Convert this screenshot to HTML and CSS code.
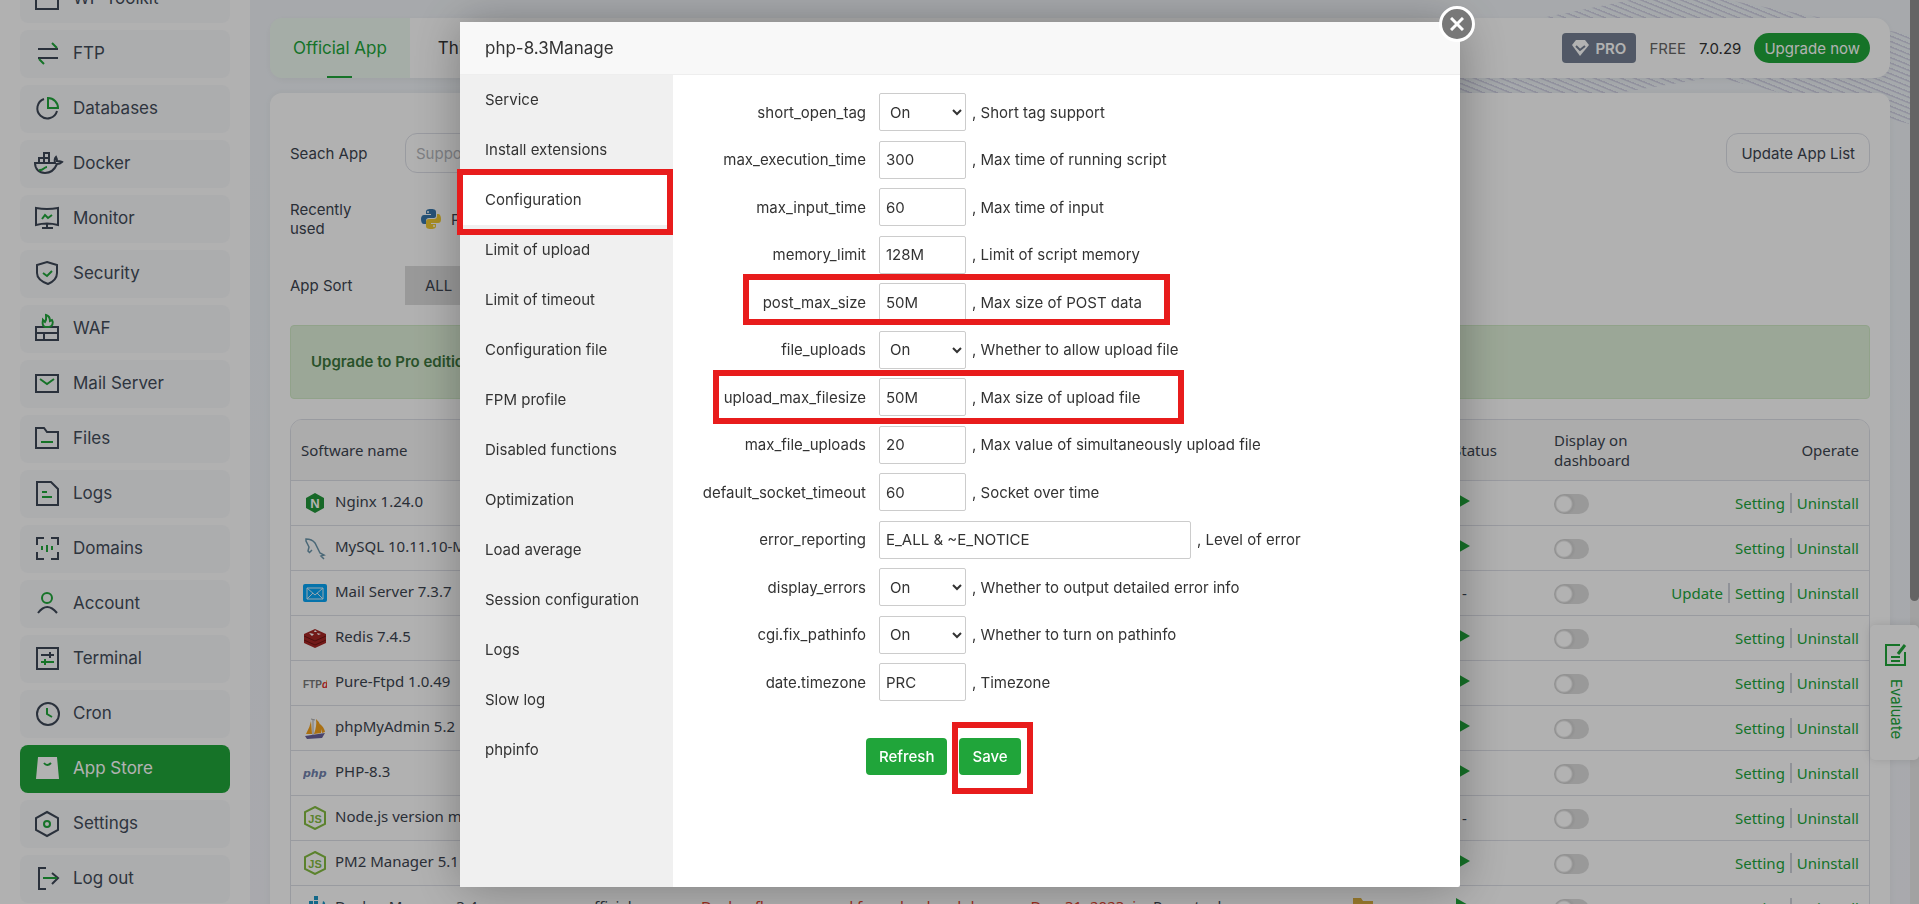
FILE: index.html
```html
<!DOCTYPE html>
<html lang="en">
<head>
	<meta charset="UTF-8">
	<title>App Store</title>
	<link rel="stylesheet" href="styles.css">
</head>
<body>

	<div class="page">
		<nav class="sidebar">
			<a href="#" class="menu-item"><svg class="icon" viewBox="0 0 24 24"><path d="M1 2H23V23H1Z"/></svg>WP Toolkit</a>
			<a href="#" class="menu-item"><svg class="icon" viewBox="0 0 24 24"><path d="M3 8H23M3 17H23"/><path class="green" d="M17 2L22 7M4 18L9 23"/></svg>FTP</a>
			<a href="#" class="menu-item"><svg class="icon" viewBox="0 0 24 24"><path d="M9 3A10 10 0 1 0 22 15"/><path class="green" d="M13 2V12H23A10 10 0 0 0 13 2Z"/></svg>Databases</a>
			<a href="#" class="menu-item"><svg class="icon" viewBox="0 0 24 24"><path d="M0 12H20C19 8 20 7 21 6C22 8 22 9 22 10C24 10 25 10 27 11C25 13 23 13 22 13C19 20 15 22 10 22C4 22 0 18 0 12ZM4 12V7H14V12M9 12V2H14V7"/><path class="green" d="M4 19C8 20 9 16 12 16"/></svg>Docker</a>
			<a href="#" class="menu-item"><svg class="icon" viewBox="0 0 24 24"><path d="M1 2Q12 4 23 2V19Q12 16 1 19ZM12 18V22M7 22H18"/><path class="green" d="M7 13L10 9L13 12L17 9"/></svg>Monitor</a>
			<a href="#" class="menu-item"><svg class="icon" viewBox="0 0 24 24"><path d="M12 1L22 4V12Q22 19 13 23Q2 19 2 12V4Z"/><path class="green" d="M8 12L12 15L17 10"/></svg>Security</a>
			<a href="#" class="menu-item"><svg class="icon" viewBox="0 0 24 24"><path d="M1 11H23V24H1ZM1 17H23M9 17V24"/><path class="green" d="M10 11C6 9 8 6 8 4L10 6C12 3 11 1 11 -1C15 0 15 4 15 5L17 4C19 7 17 11 14 11Z"/></svg>WAF</a>
			<a href="#" class="menu-item"><svg class="icon" viewBox="0 0 24 24"><path d="M1 4H23V21H1Z"/><path class="green" d="M5 8L12 13L19 8"/></svg>Mail Server</a>
			<a href="#" class="menu-item"><svg class="icon" viewBox="0 0 24 24"><path d="M1 2H9L12 6H23V22H1Z"/><path class="green" d="M6 16H18"/></svg>Files</a>
			<a href="#" class="menu-item"><svg class="icon" viewBox="0 0 24 24"><path d="M2 1H16L23 8V24H2Z"/><path class="green" d="M7 11H12M7 16H17"/></svg>Logs</a>
			<a href="#" class="menu-item"><svg class="icon" viewBox="0 0 24 24"><path d="M9 2H2V9M16 2H23V9M9 23H2V16M16 23H23V16"/><path class="green" d="M7 10V14M12 9V16M17 10V14"/></svg>Domains</a>
			<a href="#" class="menu-item"><svg class="icon" viewBox="0 0 24 24"><path d="M3 22Q12 10 22 22"/><circle class="green" cx="12" cy="7" r="5"/></svg>Account</a>
			<a href="#" class="menu-item"><svg class="icon" viewBox="0 0 24 24"><path d="M2 2H23V23H2ZM6 9H19M15 6V12"/><path class="green" d="M6 16H19M10 13V19"/></svg>Terminal</a>
			<a href="#" class="menu-item"><svg class="icon" viewBox="0 0 24 24"><circle cx="13" cy="13" r="11"/><path class="green" d="M12 7V13L17 16"/></svg>Cron</a>
			<a href="#" class="menu-item active"><svg class="icon" viewBox="0 0 24 24"><path class="bag" d="M3 1H22L24 23H1Z"/><path class="green" d="M9 7Q12 11 16 7"/></svg>App Store</a>
			<a href="#" class="menu-item"><svg class="icon" viewBox="0 0 24 24"><path d="M12 1L23 7V19L12 25L1 19V7Z"/><circle class="green" cx="12" cy="13" r="3"/></svg>Settings</a>
			<a href="#" class="menu-item"><svg class="icon" viewBox="0 0 24 24"><path d="M11 2H4V23H11M17 7L23 12L17 18"/><path class="green" d="M8 12H22"/></svg>Log out</a>
		</nav>

		<main class="main">
			<div class="wave"></div>
			<header class="topbar">
				<a href="#" class="tab active">Official App</a>
				<a href="#" class="tab">Third-party App</a>
				<div class="version">
					<span class="pro"><svg width="17" height="16" viewBox="0 0 17 16"><path fill="#fff" d="M4 0H13L17 5L8 16L0 5Z"/><path fill="none" stroke="#747f92" stroke-width="2" d="M4 6L8 10L13 6"/></svg>PRO</span>
					<span class="free">FREE</span>
					<span>7.0.29</span>
					<button class="upgrade">Upgrade now</button>
				</div>
			</header>

			<section class="panel">
				<div class="filter">
					<label for="search">Seach App</label>
					<input type="text" id="search" class="search" placeholder="Supports fuzzy search">
					<button class="update">Update App List</button>
				</div>
				<div class="filter recent">
					<span class="filter-name">Recently<br>used</span>
					<svg class="python" width="20" height="20" viewBox="0 0 20 20"><path fill="#3776ab" d="M10 0C6 0 5 1 5 3V5H10V6H3C1 6 0 8 0 10C0 13 1 15 3 15H5V12C5 10 6 9 8 9H13C14 9 15 8 15 7V3C15 1 14 0 10 0Z"/><path fill="#f2cb30" d="M16 5H17C19 5 20 7 20 10C20 13 19 14 17 14H10V15H15V17C15 19 14 20 10 20C6 20 5 19 5 17V13C5 11 6 10 8 10H13C15 10 16 9 16 7Z"/><circle cx="7" cy="3" r="1" fill="#fff"/><circle cx="13" cy="17" r="1" fill="#fff"/></svg>
					<span>Python Manager</span>
				</div>
				<div class="filter">
					<span class="filter-name">App Sort</span>
					<button class="all">ALL</button>
				</div>
				<div class="alert">Upgrade to Pro edition</div>

				<div class="table-box">
					<table>
						<colgroup><col class="c-name"><col class="c-dev"><col><col class="c-expire"><col class="c-path"><col class="c-status"><col class="c-display"><col class="c-operate"></colgroup>
						<thead>
							<tr><th>Software name</th><th>Developer</th><th>Instructions</th><th>Expire date</th><th>Location</th><th>Status</th><th>Display on dashboard</th><th class="operate">Operate</th></tr>
						</thead>
						<tbody>
							<tr>
								<td><div class="soft"><svg viewBox="0 0 24 24"><path fill="#22963a" d="M12 2L21 7V17L12 22L3 17V7Z"/><text x="12" y="17" class="logo-n">N</text></svg>Nginx 1.24.0</div></td>
								<td></td><td></td><td></td><td></td>
								<td><svg class="play" viewBox="0 0 14 16"><path d="M0 0L14 8L0 16Z"/></svg></td>
								<td class="display"><input type="checkbox" class="switch" aria-label="Display Nginx"></td>
								<td class="operate"><a href="#">Setting</a><a href="#">Uninstall</a></td>
							</tr>
							<tr>
								<td><div class="soft"><svg viewBox="0 0 24 24"><path fill="none" stroke="#6c96ab" stroke-width="1.5" d="M7 17L5 15L6 11L3 5L3 3Q9 3 12 7Q15 13 17 17L21 19L18 20L21 23M7 16L9 14"/></svg>MySQL 10.11.10-MariaDB</div></td>
								<td></td><td></td><td></td><td></td>
								<td><svg class="play" viewBox="0 0 14 16"><path d="M0 0L14 8L0 16Z"/></svg></td>
								<td class="display"><input type="checkbox" class="switch" aria-label="Display MySQL"></td>
								<td class="operate"><a href="#">Setting</a><a href="#">Uninstall</a></td>
							</tr>
							<tr>
								<td><div class="soft"><svg viewBox="0 0 24 24"><rect y="3" width="24" height="18" rx="2" fill="#08a5f5"/><path fill="none" stroke="#d9effc" d="M4 7H20V18H4ZM4 7L12 14L20 7M4 18L10 12M20 18L14 12"/></svg>Mail Server 7.3.7</div></td>
								<td></td><td></td><td></td><td></td>
								<td class="dash">-</td>
								<td class="display"><input type="checkbox" class="switch" aria-label="Display Mail Server"></td>
								<td class="operate"><a href="#">Update</a><a href="#">Setting</a><a href="#">Uninstall</a></td>
							</tr>
							<tr>
								<td><div class="soft"><svg viewBox="0 0 24 24"><path fill="#a52624" d="M1 8L12 3L23 8V17L12 22L1 17Z"/><path fill="none" stroke="#701614" d="M1 10L12 15L23 10M1 14L12 19L23 14"/><path fill="#fff" d="M6 7L11 8L9 10ZM12 4L14 6L11 6ZM14 7L18 8L15 9Z"/></svg>Redis 7.4.5</div></td>
								<td></td><td></td><td></td><td></td>
								<td><svg class="play" viewBox="0 0 14 16"><path d="M0 0L14 8L0 16Z"/></svg></td>
								<td class="display"><input type="checkbox" class="switch" aria-label="Display Redis"></td>
								<td class="operate"><a href="#">Setting</a><a href="#">Uninstall</a></td>
							</tr>
							<tr>
								<td><div class="soft"><svg viewBox="0 0 24 24"><text x="0" y="17" class="logo-ftp">FTP<tspan>d</tspan></text></svg>Pure-Ftpd 1.0.49</div></td>
								<td></td><td></td><td></td><td></td>
								<td><svg class="play" viewBox="0 0 14 16"><path d="M0 0L14 8L0 16Z"/></svg></td>
								<td class="display"><input type="checkbox" class="switch" aria-label="Display Pure-Ftpd"></td>
								<td class="operate"><a href="#">Setting</a><a href="#">Uninstall</a></td>
							</tr>
							<tr>
								<td><div class="soft"><svg viewBox="0 0 24 24"><path fill="#f3a11c" d="M8 5L9 18L3 18Q7 11 8 5ZM13 3Q19 8 18 17L11 18Q14 10 13 3ZM17 8Q21 11 22 16L19 17Z"/><path fill="#67609a" d="M2 20L22 17L19 22L4 23Z"/><path fill="none" stroke="#aaa" d="M10 4V19M8 3L12 4"/></svg>phpMyAdmin 5.2</div></td>
								<td></td><td></td><td></td><td></td>
								<td><svg class="play" viewBox="0 0 14 16"><path d="M0 0L14 8L0 16Z"/></svg></td>
								<td class="display"><input type="checkbox" class="switch" aria-label="Display phpMyAdmin"></td>
								<td class="operate"><a href="#">Setting</a><a href="#">Uninstall</a></td>
							</tr>
							<tr>
								<td><div class="soft"><svg viewBox="0 0 24 24"><text x="0" y="16" class="logo-php">php</text></svg>PHP-8.3</div></td>
								<td></td><td></td><td></td><td></td>
								<td><svg class="play" viewBox="0 0 14 16"><path d="M0 0L14 8L0 16Z"/></svg></td>
								<td class="display"><input type="checkbox" class="switch" aria-label="Display PHP"></td>
								<td class="operate"><a href="#">Setting</a><a href="#">Uninstall</a></td>
							</tr>
							<tr>
								<td><div class="soft"><svg viewBox="0 0 24 24"><path fill="none" stroke="#83bb41" stroke-width="2" d="M12 1L22 6V18L12 23L2 18V6Z"/><text x="12" y="17" class="logo-js">JS</text></svg>Node.js version manager</div></td>
								<td></td><td></td><td></td><td></td>
								<td class="dash">-</td>
								<td class="display"><input type="checkbox" class="switch" aria-label="Display Node.js"></td>
								<td class="operate"><a href="#">Setting</a><a href="#">Uninstall</a></td>
							</tr>
							<tr>
								<td><div class="soft"><svg viewBox="0 0 24 24"><path fill="none" stroke="#83bb41" stroke-width="2" d="M12 1L22 6V18L12 23L2 18V6Z"/><text x="12" y="17" class="logo-js">JS</text></svg>PM2 Manager 5.1</div></td>
								<td></td><td></td><td></td><td></td>
								<td><svg class="play" viewBox="0 0 14 16"><path d="M0 0L14 8L0 16Z"/></svg></td>
								<td class="display"><input type="checkbox" class="switch" aria-label="Display PM2"></td>
								<td class="operate"><a href="#">Setting</a><a href="#">Uninstall</a></td>
							</tr>
							<tr>
								<td><div class="soft"><svg viewBox="0 0 24 24"><path fill="#1c96c5" d="M11 0H15V4H11ZM6 5H10V9H6ZM11 5H15V9H11ZM1 10H22Q20 21 10 21Q2 21 1 10ZM20 5Q23 6 22 11H19Z"/></svg>Docker Manager 3.4</div></td>
								<td>official</td>
								<td class="red">Docker flow, reserved for upload and down on Dec. 31, 2023, in use</td>
								<td>Perpetual</td>
								<td><svg class="folder" viewBox="0 0 20 16"><path d="M0 0H8L10 3H20V16H0Z"/></svg></td>
								<td><svg class="play" viewBox="0 0 14 16"><path d="M0 0L14 8L0 16Z"/></svg></td>
								<td class="display"><input type="checkbox" class="switch" aria-label="Display Docker"></td>
								<td class="operate"><a href="#">Setting</a><a href="#">Uninstall</a></td>
							</tr>
						</tbody>
					</table>
				</div>
			</section>
		</main>
		<div class="scrollbar"><div class="thumb"></div></div>
		<a href="#" class="evaluate"><svg width="22" height="22" viewBox="0 0 22 22"><path fill="none" stroke="#20a53a" stroke-width="2" d="M15 1H1V21H20V8M6 13H15M6 17H15"/><path stroke="#20a53a" stroke-width="3" d="M13 10L20 1"/></svg><span>Evaluate</span></a>
	</div>

	<div class="shade">
		<div class="modal">
			<button class="close" aria-label="Close"><svg width="14" height="14" viewBox="0 0 14 14"><path stroke="#fff" stroke-width="3" d="M1 1L13 13M13 1L1 13"/></svg></button>
			<div class="modal-title">php-8.3Manage</div>
			<div class="modal-body">
				<nav class="side">
					<a href="#">Service</a>
					<a href="#">Install extensions</a>
					<a href="#" class="on">Configuration</a>
					<a href="#">Limit of upload</a>
					<a href="#">Limit of timeout</a>
					<a href="#">Configuration file</a>
					<a href="#">FPM profile</a>
					<a href="#">Disabled functions</a>
					<a href="#">Optimization</a>
					<a href="#">Load average</a>
					<a href="#">Session configuration</a>
					<a href="#">Logs</a>
					<a href="#">Slow log</a>
					<a href="#">phpinfo</a>
				</nav>
				<form class="config">
					<div class="rows">
						<div class="row"><label for="short_open_tag">short_open_tag</label><select id="short_open_tag"><option>On</option><option>Off</option></select><span>, Short tag support</span></div>
						<div class="row"><label for="max_execution_time">max_execution_time</label><input type="text" id="max_execution_time" value="300"><span>, Max time of running script</span></div>
						<div class="row"><label for="max_input_time">max_input_time</label><input type="text" id="max_input_time" value="60"><span>, Max time of input</span></div>
						<div class="row"><label for="memory_limit">memory_limit</label><input type="text" id="memory_limit" value="128M"><span>, Limit of script memory</span></div>
						<div class="row"><label for="post_max_size">post_max_size</label><input type="text" id="post_max_size" value="50M"><span>, Max size of POST data</span></div>
						<div class="row"><label for="file_uploads">file_uploads</label><select id="file_uploads"><option>On</option><option>Off</option></select><span>, Whether to allow upload file</span></div>
						<div class="row"><label for="upload_max_filesize">upload_max_filesize</label><input type="text" id="upload_max_filesize" value="50M"><span>, Max size of upload file</span></div>
						<div class="row"><label for="max_file_uploads">max_file_uploads</label><input type="text" id="max_file_uploads" value="20"><span>, Max value of simultaneously upload file</span></div>
						<div class="row"><label for="default_socket_timeout">default_socket_timeout</label><input type="text" id="default_socket_timeout" value="60"><span>, Socket over time</span></div>
						<div class="row"><label for="error_reporting">error_reporting</label><input type="text" class="wide" id="error_reporting" value="E_ALL &amp; ~E_NOTICE"><span>, Level of error</span></div>
						<div class="row"><label for="display_errors">display_errors</label><select id="display_errors"><option>On</option><option>Off</option></select><span>, Whether to output detailed error info</span></div>
						<div class="row"><label for="fix_pathinfo">cgi.fix_pathinfo</label><select id="fix_pathinfo"><option>On</option><option>Off</option></select><span>, Whether to turn on pathinfo</span></div>
						<div class="row"><label for="timezone">date.timezone</label><input type="text" id="timezone" value="PRC"><span>, Timezone</span></div>
					</div>
					<div class="buttons">
						<button type="button">Refresh</button>
						<button type="button">Save</button>
					</div>
				</form>
			</div>
			<!-- red marks -->
			<div class="mark mark-menu"></div>
			<div class="mark mark-post"></div>
			<div class="mark mark-upload"></div>
			<div class="mark mark-save"></div>
		</div>
	</div>

</body>
</html>
```

FILE: styles.css
```css
* {
	box-sizing: border-box;
}

body {
	margin: 0;
	height: 100vh;
	overflow: hidden;
	font-family: Inter, "Liberation Sans", sans-serif;
	font-size: 15px;
	color: #333;
}

a {
	color: inherit;
	text-decoration: none;
}

button, input, select {
	font-family: inherit;
	font-size: 15px;
	color: inherit;
}

.page {
	display: flex;
	position: relative;
	height: 100vh;
	overflow: hidden;
	background: #f0f2f8;
}

/* sidebar */
.sidebar {
	display: flex;
	flex-direction: column;
	justify-content: flex-end;
	gap: 7px;
	flex: none;
	width: 250px;
	padding: 0 20px 1px;
	background: #fefefe;
}

.menu-item {
	display: flex;
	align-items: center;
	gap: 14px;
	flex: none;
	height: 48px;
	padding: 0 15px 2px;
	border-radius: 8px;
	background: #f7f8fa;
	color: #434c5a;
	font-size: 17px;
}

.menu-item.active {
	background: #20a53a;
	color: #fff;
}

.icon {
	width: 24px;
	height: 24px;
	fill: none;
	stroke: #3d4756;
	stroke-width: 2;
	overflow: visible;
}

.icon .green {
	stroke: #20a53a;
}

.icon .bag {
	fill: #fff;
	stroke: none;
}

/* main */
.main {
	position: relative;
	flex: 1;
	display: flex;
	flex-direction: column;
	gap: 15px;
	min-width: 0;
	padding: 18px 20px 0;
	background: linear-gradient(180deg, #f0f3f7, #eef3f7 300px, #f2f3f8);
}

.wave {
	position: absolute;
	top: 0;
	right: 0;
	width: 650px;
	height: 124px;
	background: repeating-linear-gradient(202deg, #d2d2e4 0, #d2d2e4 1px, #edf2f6 2px, #edf2f6 5px);
	clip-path: polygon(57% 0, 72% 0, 100% 28%, 100% 100%, 70% 62%, 55% 75%, 0 75%, 0 60%);
}

.topbar {
	position: relative;
	display: flex;
	flex: none;
	height: 60px;
	border-radius: 15px;
	background: #fefefe;
	box-shadow: 0 2px 8px rgba(0, 0, 0, .05);
}

.tab {
	position: relative;
	display: flex;
	align-items: center;
	padding: 0 28px;
	font-size: 17px;
}

.tab.active {
	padding: 0 23px;
	border-radius: 12px 0 0 12px;
	background: #edf8f0;
	color: #20a53a;
}

.tab.active::after {
	content: "";
	position: absolute;
	left: 50%;
	bottom: 0;
	width: 25px;
	height: 2px;
	margin-left: -13px;
	background: #20a53a;
}

.version {
	display: flex;
	align-items: center;
	gap: 13px;
	margin-left: auto;
	padding-right: 20px;
}

.pro {
	display: flex;
	align-items: center;
	gap: 6px;
	height: 30px;
	padding: 0 10px;
	border-radius: 4px;
	background: #747f92;
	color: #fff;
	font-weight: 600;
}

.free {
	color: #666;
}

.upgrade {
	height: 30px;
	padding: 0 10px;
	border: 0;
	border-radius: 15px;
	background: #20a53a;
	color: #fff;
}

.panel {
	position: relative;
	flex: none;
	padding: 40px 20px 0;
	border-radius: 12px 12px 0 0;
	background: #fefefe;
	box-shadow: 0 0 8px rgba(0, 0, 0, .05);
}

.filter {
	display: flex;
	align-items: center;
	height: 40px;
	color: #3c4450;
}

.filter label, .filter-name {
	width: 115px;
	line-height: 19px;
}

.search {
	width: 330px;
	height: 40px;
	padding: 0 10px;
	border: 1px solid #dcdee6;
	border-radius: 12px;
	background: #fefefe;
}

.search::placeholder {
	color: #b5b7bc;
}

.update {
	height: 40px;
	margin-left: auto;
	padding: 0 14px;
	border: 1px solid #dcdee6;
	border-radius: 12px;
	background: #fefefe;
}

.recent {
	height: 92px;
}

.python {
	margin: 0 10px 0 16px;
}

.all {
	height: 39px;
	padding: 0 20px;
	border: 0;
	background: #dcdcdc;
}

.alert {
	display: flex;
	align-items: center;
	height: 74px;
	margin: 20px 0;
	padding: 0 20px 2px;
	border: 1px solid #d0e9c6;
	border-radius: 4px;
	background: #dff0d8;
	color: #3c763d;
	font-weight: 600;
}

/* table */
.table-box {
	border: 1px solid #dcdee6;
	border-radius: 12px 12px 0 0;
	overflow: hidden;
}

table {
	width: 100%;
	table-layout: fixed;
	border-collapse: separate;
	border-spacing: 0;
	font-family: "Noto Sans", sans-serif;
	color: #3c4450;
}

.c-name { width: 284px; }
.c-dev { width: 116px; }
.c-expire { width: 200px; }
.c-path { width: 100px; }
.c-status { width: 101px; }
.c-display { width: 108px; }
.c-operate { width: 217px; }

th {
	height: 61px;
	padding: 0 10px;
	border-bottom: 1px solid #dcdee6;
	background: #f7f7f7;
	font-weight: normal;
	line-height: 20px;
	text-align: left;
}

td {
	height: 45px;
	padding: 0 10px 4px;
	border-bottom: 1px solid #dcdee6;
	line-height: 20px;
	white-space: nowrap;
	overflow: hidden;
}

.soft {
	display: flex;
	align-items: center;
	gap: 8px;
	padding-left: 2px;
}

.soft svg {
	flex: none;
	width: 24px;
	height: 24px;
	margin-top: 4px;
}

.logo-n {
	fill: #fff;
	font: bold 13px "Liberation Sans", sans-serif;
	text-anchor: middle;
}

.logo-ftp {
	fill: #777;
	font: bold 10px "Liberation Sans", sans-serif;
}

.logo-ftp tspan {
	fill: #d33;
	font-style: italic;
}

.logo-php {
	fill: #7182ad;
	font: italic bold 11px "DejaVu Sans", sans-serif;
}

.logo-js {
	fill: #83bb41;
	font: bold 11px "Liberation Sans", sans-serif;
	text-anchor: middle;
}

.play {
	display: block;
	width: 14px;
	height: 16px;
	margin-left: 3px;
	fill: #20a53a;
}

.folder {
	display: block;
	width: 20px;
	height: 16px;
	fill: #dcb040;
}

.dash {
	padding-left: 19px;
	padding-bottom: 0;
}

.red {
	color: #e0402a;
}

.switch {
	display: block;
	appearance: none;
	width: 35px;
	height: 20px;
	margin: 2px 0 0;
	border-radius: 10px;
	background: radial-gradient(circle at 10px 10px, #fff 7px, #d0d0d0 9px, #dcdcdc 12px);
}

.display, .operate {
	padding-bottom: 0;
}

.operate {
	text-align: right;
}

td.operate a {
	color: #20a53a;
}

td.operate a + a {
	margin-left: 5px;
	padding-left: 5px;
	border-left: 2px solid #cfd2da;
}

.scrollbar {
	flex: none;
	width: 9px;
	background: #e8e8e8;
}

.thumb {
	height: 601px;
	border-radius: 0 0 5px 5px;
	background: #909090;
}

.evaluate {
	position: absolute;
	top: 625px;
	right: 0;
	display: flex;
	flex-direction: column;
	align-items: center;
	gap: 13px;
	width: 49px;
	height: 135px;
	padding: 19px 0 0 3px;
	border-radius: 5px;
	background: #fefefe;
	box-shadow: 0 0 10px rgba(0, 0, 0, .12);
	color: #20a53a;
}

.evaluate span {
	writing-mode: vertical-rl;
}

/* modal */
.shade {
	position: fixed;
	inset: 0;
	display: flex;
	justify-content: center;
	padding: 22px 0 17px 1px;
	background: rgba(0, 0, 0, .3);
}

.modal {
	position: relative;
	display: flex;
	flex-direction: column;
	width: 1000px;
	border-radius: 2px;
	background: #fff;
	box-shadow: 1px 1px 50px rgba(0, 0, 0, .3);
}

.close {
	position: absolute;
	top: -16px;
	right: -15px;
	display: flex;
	align-items: center;
	justify-content: center;
	width: 36px;
	height: 36px;
	padding: 0;
	border: 3px solid #fff;
	border-radius: 50%;
	background: #787878;
}

.modal-title {
	height: 53px;
	padding: 0 25px;
	border-bottom: 1px solid #eee;
	background: #f8f8f8;
	font-size: 17px;
	line-height: 52px;
}

.modal-body {
	display: flex;
	flex: 1;
}

.side {
	width: 213px;
	background: #f0f0f0;
}

.side a {
	display: block;
	height: 50px;
	padding-left: 25px;
	line-height: 50px;
}

.side .on {
	background: #fff;
}

.config {
	flex: 1;
	padding-top: 18px;
}

.rows {
	display: flex;
	flex-direction: column;
	justify-content: space-between;
	height: 608px;
}

.row {
	display: flex;
	align-items: center;
	height: 38px;
}

.row label {
	width: 193px;
	margin-right: 13px;
	text-align: right;
}

.row input, .row select {
	width: 87px;
	height: 38px;
	margin-right: 6px;
	padding: 0 6px;
	border: 1px solid #ccc;
	border-radius: 2px;
	background: #fff;
}

.row .wide {
	width: 312px;
}

.buttons {
	display: flex;
	gap: 12px;
	padding: 37px 0 0 193px;
}

.buttons button {
	height: 37px;
	padding: 0 13px;
	border: 0;
	border-radius: 4px;
	background: #20a53a;
	color: #fff;
	font-weight: 500;
}

.mark {
	position: absolute;
	border: 6px solid #e81c1c;
	pointer-events: none;
}

.mark-menu {
	top: 147px;
	left: -3px;
	width: 216px;
	height: 66px;
}

.mark-post {
	top: 252px;
	left: 283px;
	width: 427px;
	height: 51px;
}

.mark-upload {
	top: 348px;
	left: 253px;
	width: 471px;
	height: 54px;
}

.mark-save {
	top: 700px;
	left: 492px;
	width: 81px;
	height: 72px;
}
```
